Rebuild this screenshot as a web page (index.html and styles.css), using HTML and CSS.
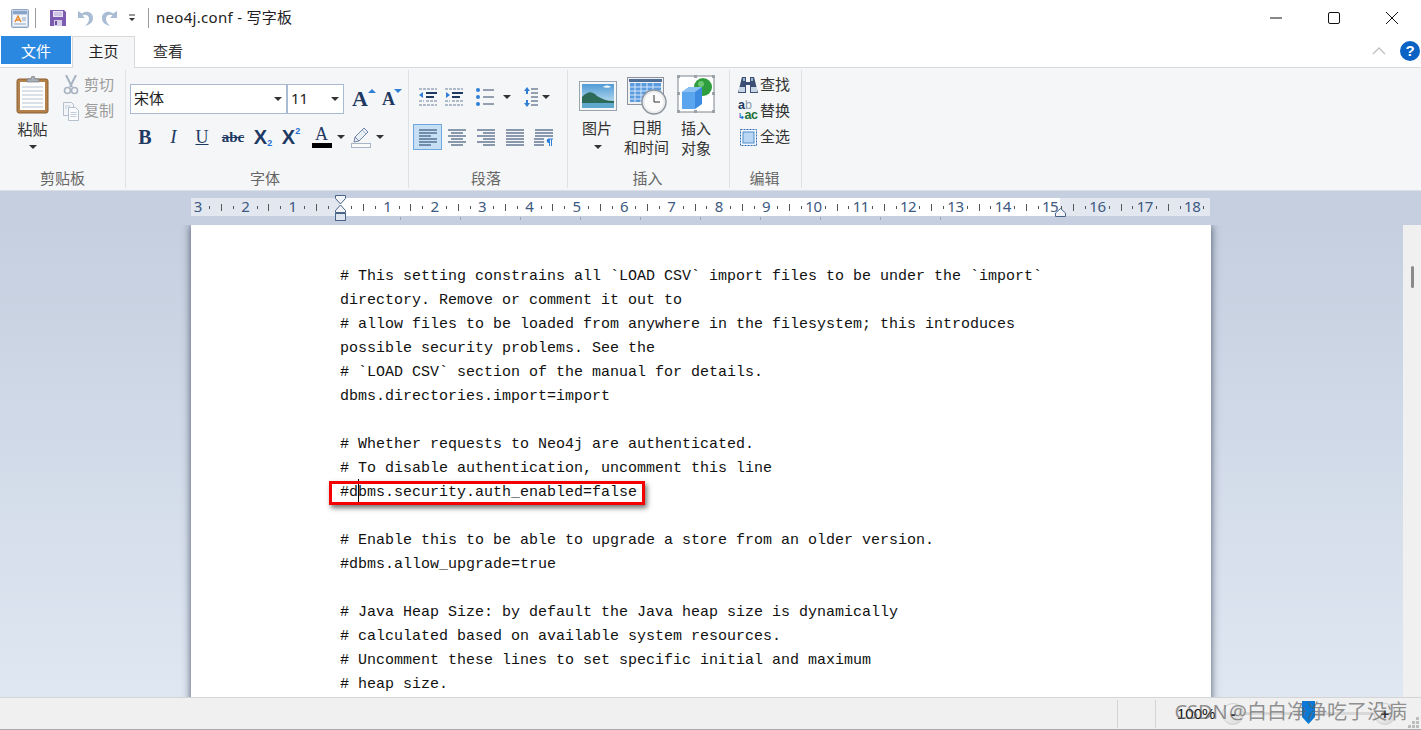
FILE: index.html
```html
<!DOCTYPE html>
<html lang="zh">
<head>
<meta charset="utf-8">
<title>neo4j.conf - 写字板</title>
<link rel="stylesheet" href="styles.css">
</head>
<body>
<div class="app">
  <header class="titlebar">
    <svg class="qa-app" width="18" height="19" viewBox="0 0 18 19"><rect x="0.500" y="0.500" width="17" height="18" rx="1" fill="#c3d4e8" stroke="#8ea4bf"/><rect x="2" y="2" width="14" height="3" fill="#88a5c9"/><rect x="2" y="6" width="14" height="11" fill="#f1f5fa"/><path d="M4 13l3-6 3 6M5 11h4" fill="none" stroke="#e8862a" stroke-width="1.400"/><path d="M11 9h4M11 11h4M3 15h12" stroke="#8ea4bf"/></svg>
    <span class="qa-sep"></span>
    <svg class="qa-save" width="16" height="16" viewBox="0 0 16 16"><path d="M0 0h14l2 2v14H0z" fill="#7b5cb0"/><rect x="3" y="1" width="10" height="6" fill="#e9e4f3"/><path d="M4 3h8M4 5h8" stroke="#b6a6d6"/><rect x="4" y="10" width="8" height="6" fill="#d7cfe9"/><rect x="5" y="11" width="2" height="4" fill="#6a4ea0"/></svg>
    <svg class="qa-undo" width="16" height="17" viewBox="0 0 16 17"><path d="M1 1v7h7L5.500 5.500C8 4 12 5 12 9c0 3-2 5-4 7 4-1 8-3 8-8 0-6-7-8-11-4.500z" fill="#a9bcd3"/></svg>
    <svg class="qa-redo" width="16" height="17" viewBox="0 0 16 17"><path d="M15 1v7H8l2.500-2.500C8 4 4 5 4 9c0 3 2 5 4 7-4-1-8-3-8-8 0-6 7-8 11-4.500z" fill="#a9bcd3"/></svg>
    <svg class="qa-more" width="8" height="8" viewBox="0 0 8 8"><path d="M1 1h6" stroke="#333"/><path d="M1 4h6L4 7z" fill="#333"/></svg>
    <span class="qa-sep qa-sep2"></span>
    <span class="doc-title">neo4j.conf - 写字板</span>
    <div class="winctl">
      <button class="winbtn"><svg width="12" height="12" viewBox="0 0 12 12"><path d="M0 6h12" stroke="#111"/></svg></button>
      <button class="winbtn"><svg width="12" height="12" viewBox="0 0 12 12"><rect x="0.500" y="0.500" width="11" height="11" rx="1.500" fill="none" stroke="#111"/></svg></button>
      <button class="winbtn"><svg width="12" height="12" viewBox="0 0 12 12"><path d="M0 0l12 12M12 0L0 12" stroke="#111"/></svg></button>
    </div>
  </header>

  <nav class="tabs">
    <span class="tab tab-file">文件</span>
    <span class="tab tab-active">主页</span>
    <span class="tab tab-view">查看</span>
    <span class="tabs-fill"></span>
    <svg class="tab-collapse" width="14" height="8" viewBox="0 0 14 8"><path d="M1 7l6-6 6 6" fill="none" stroke="#c0c0c0" stroke-width="1.300"/></svg>
    <span class="help">?</span>
  </nav>

  <div class="ribbon">
    <section class="group g-clip">
      <div class="body clip-body">
        <div class="paste">
          <svg width="33" height="38" viewBox="0 0 33 38"><rect x="1" y="3" width="31" height="34" rx="2" fill="#b5814a" stroke="#8a5f33"/><rect x="4" y="6" width="25" height="28" fill="#fdfdfd"/><path d="M6 11h21M6 15h21M6 19h21M6 23h21M6 27h21M6 31h21" stroke="#b9c4d4"/><path d="M11 6V3h4l1-3h2l1 3h4v3z" fill="#a8afb8" stroke="#767c85" stroke-width="0.700"/></svg>
          <span class="big-label">粘贴</span>
          <span class="caret caret-big"></span>
        </div>
        <div class="clip-small">
          <div class="small-row dis"><svg width="14" height="20" viewBox="0 0 14 20"><path d="M2 0l6 12M12 0L6 12" stroke="#a8b3c2" stroke-width="2"/><circle cx="3.500" cy="15.500" r="3" fill="none" stroke="#a8b3c2" stroke-width="1.600"/><circle cx="10.500" cy="15.500" r="3" fill="none" stroke="#a8b3c2" stroke-width="1.600"/></svg><span>剪切</span></div>
          <div class="small-row dis"><svg width="16" height="19" viewBox="0 0 16 19"><path d="M.5.500h8l2 2v11H.5z" fill="#f3f5f8" stroke="#b4bfcd"/><path d="M5.500 5.500h7l3 3v10h-10z" fill="#fafbfc" stroke="#b4bfcd"/><path d="M7.500 10.500h6M7.500 12.500h6M7.500 14.500h6M2 4h5M2 6h2" stroke="#c4cdd9"/></svg><span>复制</span></div>
        </div>
      </div>
      <div class="group-label">剪贴板</div>
    </section>

    <section class="group g-font">
      <div class="body">
        <div class="font-row">
          <div class="combo combo-name"><span>宋体</span><i class="caret"></i></div>
          <div class="combo combo-size"><span>11</span><i class="caret"></i></div>
          <span class="size-btn size-grow">A<svg width="8" height="4" viewBox="0 0 8 4"><path d="M0 4l4-4 4 4z" fill="#2f7fd6"/></svg></span>
          <span class="size-btn size-shrink">A<svg width="8" height="4" viewBox="0 0 8 4"><path d="M0 0l4 4 4-4z" fill="#2f7fd6"/></svg></span>
        </div>
        <div class="fmt-row">
          <span class="fmt f-b">B</span>
          <span class="fmt f-i">I</span>
          <span class="fmt f-u">U</span>
          <span class="fmt f-s">abc</span>
          <span class="fmt f-x">X<sub>2</sub></span>
          <span class="fmt f-x2">X<sup>2</sup></span>
          <span class="fmt f-color">A<i class="colorbar"></i></span>
          <i class="caret caret-cell"></i>
          <span class="fmt f-pen"><svg width="20" height="21" viewBox="0 0 20 21"><path d="M13 1l4 4-9 9-5 1 1-5z" fill="#e9eef5" stroke="#6f86a8"/><path d="M4 10l4 4" stroke="#6f86a8"/><path d="M11 3l4 4" stroke="#a5b5cb"/><rect x="0.500" y="16.500" width="19" height="4" fill="#fafafa" stroke="#a7b5c9"/></svg></span>
          <i class="caret caret-cell"></i>
        </div>
      </div>
      <div class="group-label lbl-shift">字体</div>
    </section>

    <section class="group g-para">
      <div class="body">
        <div class="para-row1">
          <svg class="p-dec" width="20" height="20" viewBox="0 0 20 20"><path d="M1 2h18M1 18h18M8 14h11M1 14h5" stroke="#6d7f99" stroke-dasharray="3 1"/><path d="M8 6h11M8 10h8" stroke="#1e3a63" stroke-width="2"/><path d="M1 8l4-3v6z" fill="#2f7fd6"/></svg>
          <svg class="p-inc" width="20" height="20" viewBox="0 0 20 20"><path d="M1 2h18M1 18h18M8 14h11M1 14h5" stroke="#6d7f99" stroke-dasharray="3 1"/><path d="M8 6h11M8 10h8" stroke="#1e3a63" stroke-width="2"/><path d="M6 8L2 5v6z" fill="#2f7fd6"/></svg>
          <svg class="p-list" width="20" height="20" viewBox="0 0 20 20"><circle cx="3" cy="3" r="2" fill="#2f7fd6"/><circle cx="3" cy="10" r="2" fill="#2f7fd6"/><circle cx="3" cy="17" r="2" fill="#2f7fd6"/><path d="M8 3h11M8 10h11M8 17h11" stroke="#33496b"/></svg>
          <i class="caret caret-list"></i>
          <svg class="p-space" width="14" height="20" viewBox="0 0 14 20"><path d="M3 0l3 4H4v3H2V4H0zM3 20l3-4H4v-3H2v3H0z" fill="#2f7fd6"/><path d="M7 2h7M7 6h7M7 10h7M7 14h7M7 18h7" stroke="#33496b"/></svg>
          <i class="caret caret-space"></i>
        </div>
        <div class="para-row2">
          <span class="align align-on"><svg width="18" height="17" viewBox="0 0 18 17"><path d="M0 1h18M0 4h18M0 7h12M0 10h18M0 13h18M0 16h12" stroke="#1e3a63"/></svg></span>
          <span class="align"><svg width="18" height="17" viewBox="0 0 18 17"><path d="M0 1h18M3 4h12M0 7h18M3 10h12M0 13h18M3 16h12" stroke="#1e3a63"/></svg></span>
          <span class="align"><svg width="18" height="17" viewBox="0 0 18 17"><path d="M0 1h18M6 4h12M0 7h18M6 10h12M0 13h18M6 16h12" stroke="#1e3a63"/></svg></span>
          <span class="align"><svg width="18" height="17" viewBox="0 0 18 17"><path d="M0 1h18M0 4h18M0 7h18M0 10h18M0 13h18M0 16h18" stroke="#1e3a63"/></svg></span>
          <span class="align"><svg width="19" height="17" viewBox="0 0 19 17"><path d="M1 1h18M1 4h18M1 7h18M0 10h10M0 13h10M0 16h10" stroke="#1e3a63"/><path d="M12 9.500h7v1h-1V17h-1v-6.500h-1V17h-1v-3h-.5a2.300 2.300 0 0 1 0-4.500z" fill="#2f7fd6"/></svg></span>
        </div>
      </div>
      <div class="group-label lbl-shift">段落</div>
    </section>

    <section class="group g-insert">
      <div class="body insert-body">
        <div class="ins ins-pic">
          <svg width="38" height="30" viewBox="0 0 38 30"><defs><linearGradient id="sky" x1="0" y1="0" x2="0" y2="1"><stop offset="0" stop-color="#4f9bd6"/><stop offset="1" stop-color="#d5ecf5"/></linearGradient></defs><rect x="0.500" y="0.500" width="37" height="29" fill="#f4f6f8" stroke="#9aa2ac"/><rect x="3" y="3" width="32" height="24" fill="url(#sky)"/><path d="M3 16c6-6 10-6 15-1 5 3 10 5 17 5v7H3z" fill="#2d6a5a"/><path d="M3 22h32v5H3z" fill="#5fa9cf"/><path d="M24 6c2-2 6-2 8 0-2 1-6 1-8 0z" fill="#f0f7fb"/></svg>
          <span class="big-label">图片</span>
          <span class="caret caret-big"></span>
        </div>
        <div class="ins ins-date">
          <svg width="40" height="38" viewBox="0 0 40 38"><rect x="0.500" y="0.500" width="36" height="27" fill="#eef0f3" stroke="#8d949d"/><rect x="2" y="2" width="33" height="3" fill="#4f6f99"/><rect x="3" y="6" width="31" height="19" fill="#5b9be0"/><path d="M3 10h31M3 14h31M3 18h31M3 22h31M8 6v19M14 6v19M20 6v19M26 6v19" stroke="#d8e8fa"/><circle cx="27" cy="25" r="12" fill="#e9ecef" stroke="#8d949d" stroke-width="1.400"/><circle cx="27" cy="25" r="9.500" fill="#fbfbfb"/><path d="M27 18v7h6" fill="none" stroke="#333" stroke-width="1"/></svg>
          <span class="big-label">日期</span>
          <span class="big-label">和时间</span>
        </div>
        <div class="ins ins-obj">
          <svg width="38" height="38" viewBox="0 0 38 38"><rect x="1" y="1" width="36" height="36" fill="#fff" stroke="#7e858d"/><path d="M0 0h3v3H0zM35 0h3v3h-3zM0 35h3v3H0zM35 35h3v3h-3zM17 0h3v3h-3zM0 17h3v3H0zM35 17h3v3h-3zM17 35h3v3h-3z" fill="#9aa1a9"/><circle cx="26" cy="12" r="9" fill="#2e9e3e"/><circle cx="24" cy="9" r="3" fill="#6cc873"/><path d="M5 17l7-5h13v17l-7 5H5z" fill="#3d8be0"/><path d="M5 17h13v17H5z" fill="#5aa5ee"/><path d="M5 17l7-5h13l-7 5z" fill="#8cc1f4"/></svg>
          <span class="big-label">插入</span>
          <span class="big-label">对象</span>
        </div>
      </div>
      <div class="group-label lbl-small">插入</div>
    </section>

    <section class="group g-edit">
      <div class="body edit-body">
        <div class="edit-row"><svg width="20" height="18" viewBox="0 0 20 18"><path d="M4 1h4v5h4V1h4l4 16h-8V9H8v8H0z" fill="#3a4f73"/><path d="M1 11h6v5H1zM13 11h6v5h-6z" fill="#c9d6e6"/><path d="M5 2h2v3H5zM13 2h2v3h-2z" fill="#9fb3cd"/></svg><span>查找</span></div>
        <div class="edit-row"><span class="abac"><b class="ab">a<em>b</em></b><b class="ac"><u>↳</u>ac</b></span><span>替换</span></div>
        <div class="edit-row"><svg class="sel" width="17" height="17" viewBox="0 0 17 17"><rect x="0.500" y="0.500" width="16" height="16" fill="none" stroke="#2f6fb8" stroke-dasharray="2 1"/><rect x="3" y="3" width="11" height="11" fill="#b9d7f3" stroke="#4f8fd0"/></svg><span>全选</span></div>
      </div>
      <div class="group-label lbl-small">编辑</div>
    </section>
  </div>

  <div class="ruler-band">
    <div class="ruler">
      <div class="rc"><span>3</span><i></i><i class="l"></i><i></i></div>
      <div class="rc"><span>2</span><i></i><i class="l"></i><i></i></div>
      <div class="rc"><span>1</span><i></i><i class="l"></i><i></i></div>
      <div class="rc"><span></span><i></i><i class="l"></i><i></i></div>
      <div class="rc"><span>1</span><i></i><i class="l"></i><i></i></div>
      <div class="rc"><span>2</span><i></i><i class="l"></i><i></i></div>
      <div class="rc"><span>3</span><i></i><i class="l"></i><i></i></div>
      <div class="rc"><span>4</span><i></i><i class="l"></i><i></i></div>
      <div class="rc"><span>5</span><i></i><i class="l"></i><i></i></div>
      <div class="rc"><span>6</span><i></i><i class="l"></i><i></i></div>
      <div class="rc"><span>7</span><i></i><i class="l"></i><i></i></div>
      <div class="rc"><span>8</span><i></i><i class="l"></i><i></i></div>
      <div class="rc"><span>9</span><i></i><i class="l"></i><i></i></div>
      <div class="rc"><span>10</span><i></i><i class="l"></i><i></i></div>
      <div class="rc"><span>11</span><i></i><i class="l"></i><i></i></div>
      <div class="rc"><span>12</span><i></i><i class="l"></i><i></i></div>
      <div class="rc"><span>13</span><i></i><i class="l"></i><i></i></div>
      <div class="rc"><span>14</span><i></i><i class="l"></i><i></i></div>
      <div class="rc"><span>15</span><i></i><i class="l"></i><i></i></div>
      <div class="rc"><span>16</span><i></i><i class="l"></i><i></i></div>
      <div class="rc"><span>17</span><i></i><i class="l"></i><i></i></div>
      <div class="rc rc-last"><span>18</span><i></i></div>
    </div>
    <svg class="indent-marker" width="11" height="27" viewBox="0 0 11 27"><path d="M.5.500h10v3L5.500 9 .5 3.500z" fill="#f2f4f8" stroke="#4a6388"/><path d="M5.500 10l5 5.500v2h-10v-2z" fill="#f2f4f8" stroke="#4a6388"/><rect x="0.500" y="18.500" width="10" height="7" fill="#dfe5ee" stroke="#4a6388"/></svg>
    <svg class="right-marker" width="11" height="9" viewBox="0 0 11 9"><path d="M5.500.5l5 4.500v3.500H.5V5z" fill="#f2f4f8" stroke="#4a6388"/></svg>
    <i class="tabstops"></i>
  </div>

  <div class="workspace">
    <div class="doc-area">
      <article class="page">
        <div class="ln"># This setting constrains all `LOAD CSV` import files to be under the `import`</div>
        <div class="ln">directory. Remove or comment it out to</div>
        <div class="ln"># allow files to be loaded from anywhere in the filesystem; this introduces</div>
        <div class="ln">possible security problems. See the</div>
        <div class="ln"># `LOAD CSV` section of the manual for details.</div>
        <div class="ln">dbms.directories.import=import</div>
        <div class="ln"></div>
        <div class="ln"># Whether requests to Neo4j are authenticated.</div>
        <div class="ln"># To disable authentication, uncomment this line</div>
        <div class="ln ln-hl">#dbms.security.auth_enabled=false<i class="caretline"></i><i class="redbox"></i></div>
        <div class="ln"></div>
        <div class="ln"># Enable this to be able to upgrade a store from an older version.</div>
        <div class="ln">#dbms.allow_upgrade=true</div>
        <div class="ln"></div>
        <div class="ln"># Java Heap Size: by default the Java heap size is dynamically</div>
        <div class="ln"># calculated based on available system resources.</div>
        <div class="ln"># Uncomment these lines to set specific initial and maximum</div>
        <div class="ln"># heap size.</div>
      </article>
    </div>
    <aside class="scrollbar"><i class="thumb"></i></aside>
  </div>

  <footer class="status">
    <span class="st-cell st-main"></span>
    <span class="st-cell st-mid"></span>
    <span class="zoom-pct">100%</span>
    <span class="zoom-btn">-</span>
    <span class="slider"><svg class="slider-thumb" width="13" height="23" viewBox="0 0 13 23"><path d="M0 0h13v16l-6.500 7L0 16z" fill="#0a78d4"/></svg></span>
    <span class="zoom-btn">+</span>
    <svg class="grip" width="11" height="11" viewBox="0 0 11 11"><path d="M8 0h3v3H8zM4 4h3v3H4zM8 4h3v3H8zM0 8h3v3H0zM4 8h3v3H4zM8 8h3v3H8z" fill="#bdbdbd"/></svg>
  </footer>
  <div class="watermark">CSDN @白白净净吃了没病</div>
</div>
</body>
</html>
```

FILE: styles.css
```css
* { box-sizing: border-box; }
html, body { margin: 0; height: 100%; overflow: hidden; }
body { font-family: "Noto Sans", "Noto Sans CJK SC", sans-serif; color: #333; background: #fff; }
i, em, u { font-style: normal; text-decoration: none; }

.app { position: relative; width: 100%; height: 730px; display: flex; flex-direction: column; overflow: hidden; }

/* title bar */
.titlebar { height: 36px; flex: none; display: flex; align-items: center; padding-left: 11px; background: #fff; }
.qa-sep { width: 1px; height: 20px; background: #9a9a9a; margin-left: 6px; }
.qa-save { margin-left: 14px; }
.qa-undo { margin-left: 11px; }
.qa-redo { margin-left: 9px; }
.qa-more { margin-left: 10px; }
.qa-sep2 { margin-left: 12px; }
.doc-title { margin: 0 0 4px 7px; font-size: 15px; letter-spacing: .3px; color: #222; white-space: nowrap; }
.winctl { margin-left: auto; display: flex; }
.winbtn { width: 58px; height: 36px; border: 0; background: none; padding: 0; display: flex; align-items: center; justify-content: center; }

/* tabs */
.tabs { height: 32px; flex: none; display: flex; align-items: flex-start; padding-left: 1px; background: #fff; border-bottom: 1px solid #d9d9d9; font-size: 15px; position: relative; }
.tab { height: 28px; display: flex; align-items: center; justify-content: center; white-space: nowrap; }
.tab-file { width: 70px; background: #2b88e0; color: #fff; }
.tab-active { width: 63px; height: 32px; margin-left: 1px; padding-bottom: 4px; border: 1px solid #d9d9d9; border-bottom: 0; background: #f5f6f7; color: #222; }
.tab-view { width: 66px; color: #333; }
.tabs-fill { flex: 1; }
.tab-collapse { margin-top: 11px; margin-right: 14px; }
.help { width: 20px; height: 20px; margin-top: 5px; margin-right: 1px; border-radius: 50%; background: #0a63c4; color: #fff; font: bold 15px/20px "Liberation Sans", sans-serif; text-align: center; }

/* ribbon */
.ribbon { height: 123px; flex: none; display: flex; padding-top: 2px; background: #f5f6f7; border-bottom: 1px solid #dcdfe6; font-size: 15px; }
.group { display: flex; flex-direction: column; height: 118px; border-right: 1px solid #dfe1e4; }
.body { height: 96px; }
.group-label { height: 22px; line-height: 22px; padding-top: 1px; text-align: center; color: #666; font-size: 15px; white-space: nowrap; overflow: visible; }
.lbl-shift { padding-right: 4px; }
.lbl-small { padding-right: 2px; }
.g-clip { width: 126px; }
.g-font { width: 283px; }
.g-para { width: 159px; }
.g-insert { width: 162px; }
.g-edit { width: 72px; }

.caret { display: block; width: 0; height: 0; border: 4px solid transparent; border-top-color: #333; border-bottom: 0; }
.clip-body { display: flex; padding: 6px 0 0 16px; }
.paste { width: 33px; display: flex; flex-direction: column; align-items: center; }
.big-label { line-height: 20px; color: #333; white-space: nowrap; }
.paste .big-label { margin: 5px 0 0; }
.caret-big { margin-top: 6px; }
.clip-small { margin-left: 14px; margin-top: -4px; }
.small-row { height: 26px; display: flex; align-items: center; }
.small-row svg { width: 16px; margin-right: 5px; }
.small-row span { padding-bottom: 3px; }
.dis { color: #9b9b9b; }

.font-row { display: flex; padding: 14px 0 0 4px; height: 44px; }
.combo { height: 30px; display: flex; align-items: center; justify-content: space-between; padding: 0 3px 3px; background: #fff; border: 1px solid #a9bbd3; color: #222; }
.combo .caret { margin: 3px 1px 0 0; }
.combo-name { width: 157px; }
.combo-size { width: 57px; margin-left: 0; }
.size-btn { position: relative; display: block; font: bold 22px/30px "Liberation Serif", serif; color: #1e3a63; }
.size-btn svg { position: absolute; top: 5px; right: 6px; }
.size-grow { margin-left: 8px; width: 30px; }
.size-shrink { width: 20px; font-size: 18px; }
.size-shrink svg { right: 0; top: 5px; }

.fmt-row { display: flex; align-items: center; height: 30px; margin-top: 8px; padding-left: 5px; }
.fmt { display: flex; align-items: center; justify-content: center; height: 30px; font-family: "Liberation Serif", serif; color: #1e3a63; position: relative; }
.f-b { width: 28px; font-weight: bold; font-size: 20px; }
.f-i { width: 29px; font-style: italic; font-size: 19px; }
.f-u { width: 28px; font-size: 18px; text-decoration: underline; }
.f-s { width: 34px; font-size: 15px; font-weight: bold; text-decoration: line-through; }
.f-x, .f-x2 { font: bold 20px "Liberation Sans", sans-serif; }
.f-x { width: 26px; }
.f-x2 { width: 30px; }
.f-x sub, .f-x2 sup { font-size: 9px; color: #1f6fd0; line-height: 9px; }
.f-x sub { align-self: flex-end; margin-bottom: 4px; }
.f-x2 sup { align-self: flex-start; margin-top: 5px; }
.f-color { width: 31px; flex-direction: column; font-size: 18px; line-height: 16px; }
.colorbar { display: block; width: 20px; height: 5px; background: #000; margin-top: 1px; }
.caret-cell { margin: 0; width: 8px; }
.f-pen { width: 31px; }

.para-row1 { display: flex; align-items: center; height: 40px; padding-top: 14px; }
.p-dec { margin-left: 9px; }
.p-inc { margin-left: 6px; }
.p-list { margin-left: 11px; }
.caret-list { margin-left: 8px; }
.p-space { margin-left: 13px; }
.caret-space { margin-left: 4px; }
.para-row2 { display: flex; align-items: center; margin-top: 14px; padding-left: 4px; }
.align { width: 29px; height: 26px; display: flex; align-items: center; justify-content: center; border: 1px solid transparent; }
.align-on { background: #c6dff5; border-color: #6fa8e0; }

.insert-body { display: flex; padding-left: 5px; }
.ins { display: flex; flex-direction: column; align-items: center; }
.ins svg { display: block; }
.ins-pic { width: 50px; padding-top: 11px; }
.ins-pic .big-label { margin: 7px 2px 1px 0; }
.ins-date { width: 47px; padding-top: 7px; }
.ins-date .big-label:first-of-type { margin-top: 2px; }
.ins-obj { width: 52px; padding-top: 5px; }
.ins-obj .big-label:first-of-type { margin-top: 5px; }

.edit-body { padding: 2px 0 0 8px; }
.edit-row { height: 26px; display: flex; align-items: center; color: #333; }
.edit-row > span:last-child { padding-bottom: 3px; }
.edit-row > svg, .abac { width: 20px; margin-right: 2px; flex: none; }
.edit-row > .sel { margin-left: 2px; margin-right: 3px; width: 17px; }
.abac { display: flex; flex-direction: column; line-height: 10px; font-family: "Liberation Sans", sans-serif; font-size: 12.5px; }
.ab { color: #1e3a63; }
.ab em { color: #8c9bb0; font-weight: normal; }
.ac { color: #1f6f3a; white-space: nowrap; letter-spacing: -.5px; }
.ac u { color: #1f6fd0; font-size: 8px; }

/* ruler */
.ruler-band { position: relative; height: 34px; flex: none; background: #c5cfdf; padding: 7px 0 0 191px; }
.ruler { width: 1019px; height: 18px; display: flex; padding-left: 1px; background: linear-gradient(to right, #e3e7f0 149px, #fff 149px, #fff 869px, #e3e7f0 869px); }
.rc { flex: none; width: 47.35px; display: grid; grid-template-columns: repeat(4, 11.84px); align-items: center; justify-items: center; font: 15px/18px "Noto Sans", sans-serif; color: #3d5a80; }
.rc-last { width: 24px; grid-template-columns: repeat(2, 11.84px); }
.rc span { white-space: nowrap; letter-spacing: -.5px; align-self: start; line-height: 16px; }
.rc i { display: block; width: 1px; height: 3px; background: #555; }
.rc i.l { height: 7px; }
.indent-marker { position: absolute; left: 335px; top: 4px; }
.right-marker { position: absolute; left: 1055px; top: 17px; }
.tabstops { position: absolute; left: 400px; top: 26px; width: 600px; height: 3px; background: repeating-linear-gradient(to right, #9aa5b5 0, #9aa5b5 1px, transparent 1px, transparent 60px); }

/* document */
.workspace { flex: 1; min-height: 0; display: flex; }
.doc-area { flex: 1; min-width: 0; padding-left: 191px; overflow: hidden; background: linear-gradient(to bottom, #c5cfdf 0, #dfe7f2 100%); }
.page { width: 1020px; height: 600px; padding: 40px 0 0 149px; background: #fff; box-shadow: 0 0 8px rgba(50, 60, 85, .85); font: 15px/24px "Liberation Mono", "Noto Sans CJK SC", monospace; color: #111; }
.ln { height: 24px; white-space: pre; }
.ln-hl { position: relative; }
.caretline { position: absolute; left: 18px; top: -2px; width: 1px; height: 24px; background: #000; }
.redbox { position: absolute; left: -11px; top: 0; width: 316px; height: 24px; border: 3px solid #f50000; box-shadow: 2px 3px 5px rgba(0, 0, 0, .55); }
.scrollbar { width: 18px; flex: none; background: #f0f0f0; padding: 41px 0 0 8px; }
.thumb { display: block; width: 3px; height: 22px; border-radius: 2px; background: #8a8a8a; }

/* status bar */
.status { height: 33px; flex: none; display: flex; align-items: center; background: #f0f0f0; border-top: 1px solid #d4d4d4; border-bottom: 1px solid #a8a8a8; position: relative; }
.st-cell { height: 28px; border-right: 1px solid #d4d4d4; }
.st-main { width: 1118px; }
.st-mid { width: 38px; }
.zoom-pct { margin-left: 21px; width: 45px; font: 15px "Liberation Sans", sans-serif; color: #111; }
.zoom-btn { width: 22px; height: 22px; border-radius: 50%; flex: none; display: flex; align-items: center; justify-content: center; background: linear-gradient(135deg, #fafafa, #d8d8d8); border: 1px solid #cfcfcf; font: bold 15px "Liberation Sans", sans-serif; color: #333; }
.slider { position: relative; width: 130px; height: 3px; background: #d8d8d8; flex: none; }
.slider-thumb { position: absolute; left: 58px; top: -11px; }
.grip { position: absolute; right: 2px; bottom: 1px; }

.watermark { position: absolute; right: 14px; bottom: 6px; font-size: 20px; line-height: 24px; word-spacing: -4px; color: rgba(95, 95, 95, .68); white-space: nowrap; }
```
